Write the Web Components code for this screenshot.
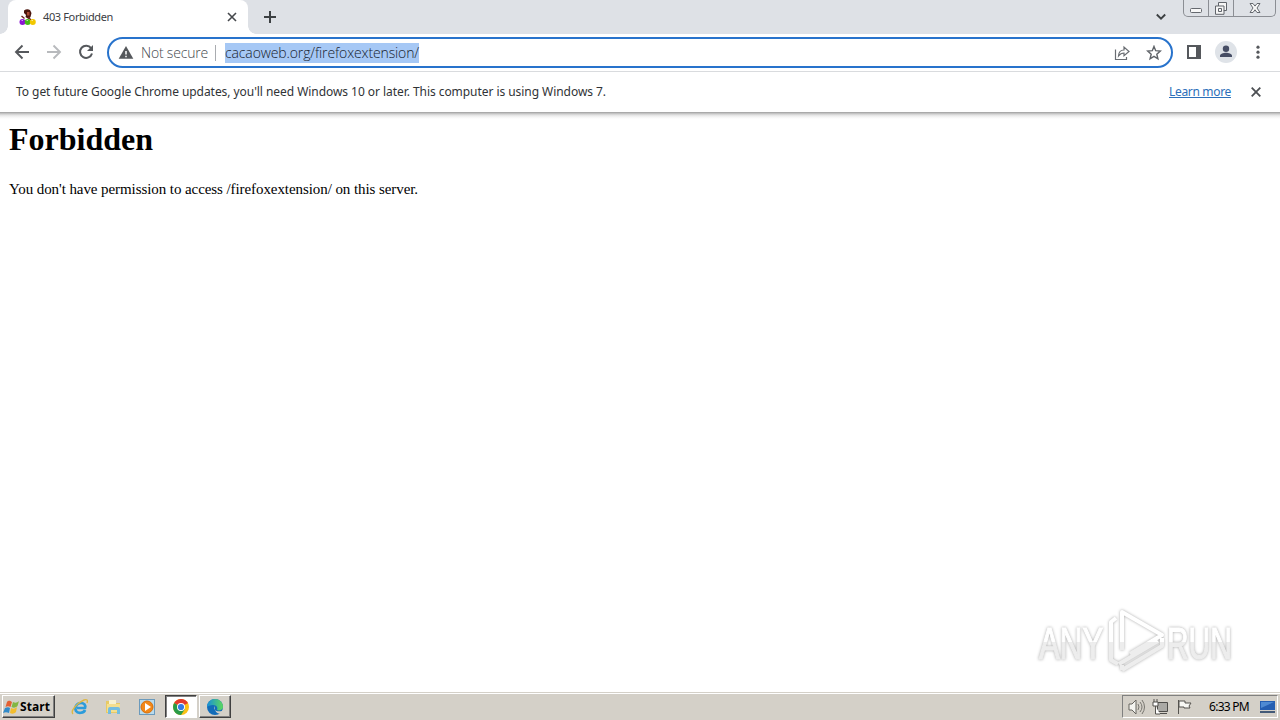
<!DOCTYPE html>
<html lang="en"><head><meta charset="utf-8"><title>403 Forbidden</title>
<style>html,body{margin:0;width:1280px;height:720px;overflow:hidden;background:#fff}</style></head>
<body><desktop-screen></desktop-screen>
<script>
const define=(name,html,ready)=>customElements.define(name,class extends HTMLElement{
 constructor(){super();this.attachShadow({mode:'open'}).innerHTML='<style>*{box-sizing:border-box}svg{display:block;flex:none}</style>'+html}
 connectedCallback(){if(ready)ready(this)}
});
// Distributes letter spacing so a label occupies the width given in its "w" attribute.
define('fit-text','<style>:host{display:block;white-space:pre;flex:none}span{display:inline-block;text-decoration:var(--line,none);text-underline-offset:1px}</style><span><slot></slot></span>',el=>{
 const s=el.shadowRoot.querySelector('span'),w=+el.getAttribute('w');
 el.style.width=w+'px';
 s.style.letterSpacing=((w-s.getBoundingClientRect().width)/el.textContent.length)+'px';
});
define('tab-strip',`<style>
:host{display:flex;height:34px;background:#dee1e6;padding-left:8px;font:11px "Noto Sans",sans-serif;color:#3c4043}
.tab{position:relative;width:240px;height:34px;background:#fff;border-radius:8px 8px 0 0;display:flex;align-items:center;padding-left:11px}
.tab:before,.tab:after{content:"";position:absolute;bottom:0;width:8px;height:8px}
.tab:before{left:-8px;background:radial-gradient(circle at 0 0,transparent 7.5px,#fff 8px)}
.tab:after{right:-8px;background:radial-gradient(circle at 100% 0,transparent 7.5px,#fff 8px)}
fit-text{margin:0 0 2px 7px}.x{margin-left:auto;margin-right:11px}.plus{margin:11px 0 0 16px}.chev{margin:13px 17px 0 auto}
.win{display:flex;width:93px;height:17px;border:1px solid #8b8e94;border-top:0;border-radius:0 0 5px 5px;margin-right:4px}
.win div{display:flex;justify-content:center;width:25px;border-right:1px solid #8b8e94}.win div:last-child{width:41px;border:0}
</style>
<div class="tab"><svg width="17" height="17" viewBox="0 0 17 17"><path d="M5 1.5Q8-.5 11 1l1.5 3-1 4-2 2-3-2 .5-2-2-2z" fill="#4b150d"/><path d="M8 3h2.5v3.5H8z" fill="#a94c36"/><path d="M2.5 7l3 2.5M9 8l3 3" stroke="#6c2119" stroke-width="1.4"/><circle cx="3.5" cy="13" r="3" fill="#8b16d2"/><circle cx="8.7" cy="13" r="3" fill="#45bc13"/><circle cx="13.8" cy="13" r="3" fill="#f2c800"/><path d="M2.5 11.5h1.5m3.5 0H9m3.5 0H14" stroke="#fff" opacity=".6"/></svg>
<fit-text w="70">403 Forbidden</fit-text><svg class="x" width="10" height="10" viewBox="0 0 10 10"><path d="M1 1l8 8M9 1L1 9" stroke="#45484c" stroke-width="1.6"/></svg></div>
<svg class="plus" width="12" height="12"><path d="M6 0v12M0 6h12" stroke="#3c4043" stroke-width="2"/></svg>
<svg class="chev" width="10" height="8"><path d="M.8 1.5L5 5.7 9.2 1.5" fill="none" stroke="#3c4043" stroke-width="1.9"/></svg>
<div class="win"><div><svg width="14" height="17"><rect x="1.5" y="8.5" width="11" height="4" rx="1" fill="#f7f7f7" stroke="#65696f"/></svg></div><div><svg width="15" height="17"><path d="M4.5 2.5h8v8H10v3.8H1.5V6h3z" fill="#f6f6f6" stroke="#61656b"/><path d="M4.5 6H10v5M4.5 8.5h3v3h-3z" fill="none" stroke="#61656b"/></svg></div><div><svg width="14" height="17"><path d="M2 3.5h3l2 2.6 2-2.6h3L9 8l3 4.5H9L7 9.8 5 12.5H2L5 8z" fill="#f8f8f8" stroke="#65696f"/></svg></div></div>`);
define('address-bar',`<style>
:host{display:flex;align-items:center;flex:none;width:1066px;height:31px;border:2px solid #2873cc;border-radius:16px;padding:0 9px;font:300 14px "Open Sans","Noto Sans",sans-serif;color:#45494e}
.sep{width:1px;height:16px;background:#a9acb0;margin:0 9px 0 7px}.url{background:#a6c8f5;color:#17222e;height:20px;line-height:20px}.ns{margin-left:7px}.share{margin-left:auto;margin-right:15px}
</style><svg width="16" height="16" viewBox="0 0 16 16"><path d="M8 1l7.3 12.8H.7z" fill="#55585c"/><path d="M8 6v3.6m0 1.2v1.5" stroke="#fff" stroke-width="1.5"/></svg><fit-text class="ns" w="67">Not secure</fit-text><div class="sep"></div><fit-text class="url" w="194">cacaoweb.org/firefoxextension/</fit-text>
<svg class="share" width="17" height="16" viewBox="0 0 17 16"><path d="M1.5 4.5v10h11V12M4.5 11C4.7 7 6.5 5 10 5V2l5 4.5-5 4.2V8C7.5 8 6 9 4.5 11z" fill="none" stroke="#696d72" stroke-width="1.2"/></svg>
<svg width="16" height="16" viewBox="0 0 16 16"><path d="M8 1.4l1.7 4.3 4.6.4-3.5 3.1 1.1 4.6L8 11.3l-3.9 2.5 1.1-4.6-3.5-3.1 4.6-.4z" fill="none" stroke="#5f6368" stroke-width="1.4"/></svg>`);
define('nav-bar',`<style>
:host{display:flex;align-items:center;height:38px;background:#fff;border-bottom:1px solid #d9dbde;padding-left:14px}
.f,.r{margin-left:16px}address-bar{margin-left:13px}.panel{margin-left:14px}.user{margin-left:14px}.dots{margin-left:19px}svg{position:relative;top:-.5px}
</style><svg width="16" height="16"><path d="M15 8H2m6.5-6.5L2 8l6.5 6.5" fill="none" stroke="#55585c" stroke-width="1.9"/></svg>
<svg class="f" width="16" height="16"><path d="M1 8h13M7.5 1.5L14 8l-6.5 6.5" fill="none" stroke="#b8babd" stroke-width="1.9"/></svg>
<svg class="r" width="16" height="16"><path d="M13.1 4.2A6.1 6.1 0 1 0 14 9.5" fill="none" stroke="#55585c" stroke-width="2"/><path d="M15 1v6H9z" fill="#55585c"/></svg><address-bar></address-bar>
<svg class="panel" width="14" height="14"><path d="M1 1h12v12H1z" fill="#fff" stroke="#55585c" stroke-width="2"/><path d="M9 0h5v14H9z" fill="#55585c"/></svg>
<svg class="user" width="22" height="22"><circle cx="11" cy="11" r="11" fill="#dfe3e8"/><circle cx="11" cy="7.8" r="3.2" fill="#474e65"/><path d="M5 16v-1.2c0-2 3.5-3 6-3s6 1 6 3V16z" fill="#474e65"/></svg>
<svg class="dots" width="4" height="14"><circle cx="2" cy="2.2" r="1.6" fill="#55585c"/><circle cx="2" cy="7.2" r="1.6" fill="#55585c"/><circle cx="2" cy="12.2" r="1.6" fill="#55585c"/></svg>`);
define('info-bar',`<style>:host{display:flex;align-items:center;height:40px;background:#fff;padding:0 19px 2px 16px;font:12px "Noto Sans",sans-serif;color:#303336}
.link{--line:underline;margin-left:auto;color:#2c6fba;margin-right:20px}</style>
<fit-text w="590">To get future Google Chrome updates, you'll need Windows 10 or later. This computer is using Windows 7.</fit-text><fit-text class="link" w="62">Learn more</fit-text><svg style="margin-top:2px" width="10" height="10"><path d="M.7.7l8.6 8.6M9.3.7L.7 9.3" stroke="#4c4f53" stroke-width="1.8"/></svg>`);
define('error-page',`<style>:host{display:block;flex:1;padding:0 9px;color:#000;font:16px/20px "Liberation Serif",serif;border-top:1px solid #aaa;background:linear-gradient(#b8b8b8 0,#e2e2e2 2px,#f5f5f5 4px,#fff 6px)}
h1{font-size:32px;line-height:37px;margin:0;padding-top:8px}p{font-size:15px;margin:21px 0 0}</style>
<h1><fit-text w="144">Forbidden</fit-text></h1><p><fit-text w="409">You don't have permission to access /firefoxextension/ on this server.</fit-text></p>`);
define('any-run-mark',`<style>:host{position:absolute;left:1025px;top:600px;width:220px;height:80px}svg{filter:drop-shadow(0 0 1.5px #aaa)}text{font:44px "Liberation Sans",sans-serif;fill:url(#g);stroke:url(#g);stroke-width:1.2}</style>
<svg width="220" height="80"><defs><linearGradient id="g" x1="0" x2="0" y1="0" y2="80" gradientUnits="userSpaceOnUse"><stop offset=".52" stop-color="#fff"/><stop offset=".53" stop-color="#ededed"/></linearGradient><linearGradient id="h" x1="0" x2="0" y1="-59" y2="21" gradientUnits="userSpaceOnUse"><stop offset=".52" stop-color="#fff"/><stop offset=".53" stop-color="#ededed"/></linearGradient></defs>
<g transform="translate(14 59) scale(.71 1)"><text style="fill:url(#h);stroke:url(#h)">ANY</text></g><g transform="translate(142 59) scale(.68 1)"><text style="fill:url(#h);stroke:url(#h)">RUN</text></g>
<path d="M97 50V12l40 23-32 19M91 18l-5 4v38l7 4M94 64l39-23M97 70l40-24v-8M97 65v5" fill="none" stroke="url(#g)" stroke-width="4" stroke-linejoin="round"/></svg>`);
define('task-bar',`<style>
:host{display:flex;align-items:center;height:28px;flex:none;background:#d4d0c8;border-top:1px solid #d4d0c8;box-shadow:inset 0 1px #fff;padding:2px 1px 2px;font:12px "Noto Sans",sans-serif;color:#000}
.btn{height:23px;display:flex;align-items:center;border:1px solid;border-color:#fff #404040 #404040 #fff;box-shadow:inset -1px -1px #808080;flex:none}
.start{width:53px;margin-left:1px;padding-left:0;font:bold 12px "Open Sans","Noto Sans",sans-serif}.i{margin-left:16px}.chrome{width:32px;margin-left:9px;background:#fff;border-color:#404040 #fff #fff #404040;box-shadow:inset 1px 1px #808080;justify-content:center}
.edge{width:32px;margin-left:2px;justify-content:center}.tray{margin-left:auto;width:156px;height:23px;border:1px solid;border-color:#808080 #fff #fff #808080;display:flex;align-items:center;padding-left:5px;margin-right:1px}.time{margin-left:15px}.mon{margin-left:10px}
</style><div class="btn start"><svg width="17" height="16"><path d="M4 3c2-2 3-1 5 0L7.5 8C6 7 4 7 2.5 8z" fill="#e36032"/><path d="M10 3c2 1 4 1 6-1l-1.5 5c-2 2-4 2-6 1z" fill="#83b642"/><path d="M2 9c2-1 4-1 5 0l-1 5c-2-1-4-1-6 0z" fill="#318ac9"/><path d="M8 9c2 1 4 1 6-1l-1 5c-2 2-4 2-6 1z" fill="#f3bd2d"/></svg><fit-text w="30">Start</fit-text></div>
<svg class="i" width="18" height="18"><path d="M14 12c-1 3-7 4-9 1-2-4 1-8 5-8 3 0 5 2 4 5H6" fill="none" stroke="#2c9cdb" stroke-width="2.7"/><path d="M2 16C-1 13 6 5 13 2c3-1 4 0 3 3" fill="none" stroke="#ddb744" stroke-width="1.4"/></svg>
<svg class="i" width="17" height="18"><path d="M1 3h6l1 2h7v10H1z" fill="#e7ca65"/><path d="M4 2h7v7H4z" fill="#f7f2d0"/><path d="M2 6h13v8H2z" fill="#f4df8e"/><path d="M3 16v-5q0-2 2-2h8q2 0 2 2v5h-3v-4H6v4z" fill="#73bde0"/></svg>
<svg class="i" width="18" height="18"><rect x="1.5" y="1.5" width="15" height="15" fill="#b9dbed" stroke="#6b9abc"/><circle cx="9" cy="9" r="6" fill="#f28818" stroke="#d96d08"/><path d="M7 5l6 4-6 4z" fill="#fff"/></svg>
<div class="btn chrome"><svg width="16" height="16" viewBox="0 0 16 16"><circle cx="8" cy="8" r="8" fill="#fbc116"/><path d="M8 8L1.1 4A8 8 0 0 1 15 4z" fill="#e33b2e"/><path d="M8 8L1.1 4A8 8 0 0 0 8 16l4-6z" fill="#299b48"/><circle cx="8" cy="8" r="4" fill="#fff"/><circle cx="8" cy="8" r="3.1" fill="#347be5"/></svg></div>
<div class="btn edge"><svg width="16" height="16" viewBox="0 0 16 16"><defs><linearGradient id="e"><stop stop-color="#178fda"/><stop offset="1" stop-color="#5dd95b"/></linearGradient></defs><circle cx="8" cy="8" r="8" fill="#126cb9"/><path d="M0 8a8 8 0 0 1 16 0c0 3-4 4-6 3 1-2 0-5-4-5-3 0-5 1-6 2z" fill="url(#e)"/><path d="M8 7c-2 4 1 6 7 5l1-1v3l-1 1c-3 0-6-1-7-4z" fill="#d4d0c8"/></svg></div>
<div class="tray"><svg width="18" height="16"><path d="M1 5h3l4-4v14l-4-4H1z" fill="#f4f4f0" stroke="#66645f"/><path d="M10 5q2 3 0 6m2-8q4 5 0 10m2-12q5 7 0 14" fill="none" stroke="#77756f"/></svg>
<svg style="margin-left:6px" width="18" height="16"><path d="M5.5 3.5h10v9h-10zM8 14.5h7" fill="#aaa9a5" stroke="#4e4d4a"/><path d="M1 3h5v4H1zm1-3v3m3-3v3M3.5 7v8H8" fill="#fff" stroke="#55534f"/></svg>
<svg style="margin-left:6px" width="18" height="16"><path d="M2.5 1v14M3 2h6v2h6l-2 3 1 2H8V8H3z" fill="#f8f8f4" stroke="#55534f"/></svg>
<fit-text class="time" w="40">6:33 PM</fit-text><svg class="mon" width="17" height="16"><path d="M1 2h15v9H1z" fill="#245eb2"/><path d="M2 3h13L2 9z" fill="#4e8ad3"/><path d="M1 13h15" stroke="#435a78" stroke-width="2"/></svg></div>`);
define('desktop-screen',`<style>:host{display:flex;flex-direction:column;position:relative;width:1280px;height:720px;overflow:hidden}tab-strip,nav-bar,info-bar{flex:none}</style>
<tab-strip></tab-strip><nav-bar></nav-bar><info-bar></info-bar><error-page></error-page><task-bar></task-bar><any-run-mark></any-run-mark>`);
</script></body></html>
